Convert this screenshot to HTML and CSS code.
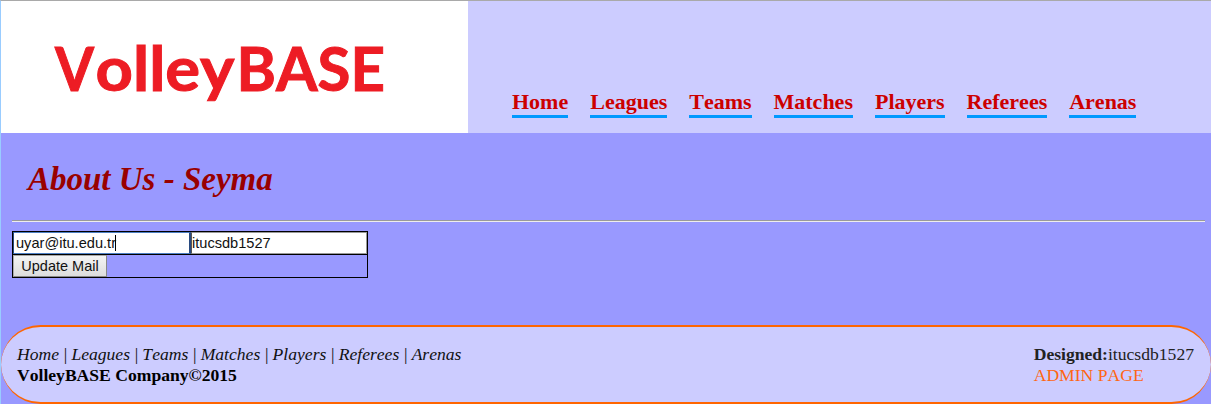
FILE: index.html
```html
<!DOCTYPE html>
<html lang="en">
<head>
<meta charset="utf-8">
<title>VolleyBASE</title>
<link rel="stylesheet" href="styles.css">
</head>
<body>
<div class="page">
  <header class="header">
    <a class="brand" href="#">
      <svg class="logo" width="467" height="132" viewBox="0 0 467 132" role="img" aria-label="VolleyBASE">
        <text class="logo-text" y="90"><tspan x="54" textLength="39" lengthAdjust="spacingAndGlyphs">V</tspan><tspan x="94.5" textLength="139" lengthAdjust="spacingAndGlyphs">olley</tspan><tspan x="235.5" textLength="148.5" lengthAdjust="spacingAndGlyphs">BASE</tspan></text>
      </svg>
    </a>
    <nav class="nav">
      <a href="#">Home</a>
      <a href="#">Leagues</a>
      <a href="#">Teams</a>
      <a href="#">Matches</a>
      <a href="#">Players</a>
      <a href="#">Referees</a>
      <a href="#">Arenas</a>
    </nav>
  </header>
  <main class="content">
    <h1 class="title">About Us - Seyma</h1>
    <div class="rule"></div>
    <form class="form">
      <div class="fields">
        <div class="field field-focus">uyar@itu.edu.tr<span class="caret"></span></div>
        <div class="field">itucsdb1527</div>
      </div>
      <div class="actions"><button class="button" type="button">Update Mail</button></div>
    </form>
  </main>
  <footer class="footer">
    <div>
      <div class="links"><a href="#">Home</a> | <a href="#">Leagues</a> | <a href="#">Teams</a> | <a href="#">Matches</a> | <a href="#">Players</a> | <a href="#">Referees</a> | <a href="#">Arenas</a></div>
      <div class="company">VolleyBASE Company©2015</div>
    </div>
    <div class="credits">
      <div><b>Designed:</b>itucsdb1527</div>
      <a class="admin" href="#">ADMIN PAGE</a>
    </div>
  </footer>
</div>
</body>
</html>
```
FILE: styles.css
```css
* { box-sizing: border-box; }
body {
  margin: 0;
  overflow: hidden;
  font-family: "Liberation Serif", serif;
  font-size: 17.6px;
  line-height: 21px;
  font-kerning: none;
}
a { color: inherit; text-decoration: none; }
.page {
  height: 404px;
  display: flex;
  flex-direction: column;
  border-top: 1px solid #a9a9a9;
  border-left: 1px solid #99ccff;
  background: #9999ff;
}
.header { display: flex; height: 132px; background: #ccccff; }
.brand { width: 467px; background: #fff; }
.logo { display: block; }
.logo-text {
  font-family: Lato, sans-serif;
  font-weight: 700;
  font-size: 60.5px;
  fill: #ed1c24;
  stroke: #ed1c24;
  stroke-width: 1px;
}
.nav {
  display: flex;
  align-items: flex-end;
  gap: 22px;
  padding: 0 0 15px 44px;
  font-size: 22px;
  font-weight: bold;
  line-height: 25px;
  color: #cc0000;
}
.nav a { border-bottom: 3px solid #0099ff; padding-bottom: 1px; }
.content { height: 192px; padding: 26px 6px 0 11px; }
.title {
  margin: 0;
  padding-left: 16px;
  height: 61px;
  font-size: 33px;
  line-height: 40px;
  font-style: italic;
  color: #990000;
}
.rule { height: 2px; border-top: 1px solid #9a9a9a; border-bottom: 1px solid #eee; }
.form {
  width: 356px;
  height: 47px;
  margin-top: 9px;
  border: 1px solid #000;
  font-family: "Liberation Sans", sans-serif;
  font-size: 14.6px;
  color: #111;
}
.fields {
  display: grid;
  grid-template-columns: 178px 176px;
  height: 23px;
  border-bottom: 1px solid #000;
}
.field {
  display: flex;
  align-items: center;
  height: 22px;
  padding-left: 0;
  background: #fff;
  border: 1px solid #999;
  border-left-color: #555;
}
.field-focus {
  padding-left: 2px;
  border-color: #4d7fc4;
  border-left-color: #284a80;
  border-right: 2px solid #284a80;
}
.caret { width: 1px; height: 16px; margin-left: -1px; background: #000; }
.actions { height: 22px; display: flex; }
.button {
  width: 94px;
  height: 22px;
  padding: 0;
  border: 1px solid #a9a9a9;
  border-right-color: #888;
  border-bottom-color: #888;
  background: linear-gradient(#f4f4f4, #dddddd);
  font: 14.5px "Liberation Sans", sans-serif;
  color: #111;
}
.footer {
  display: flex;
  justify-content: space-between;
  height: 79px;
  padding: 17px 17px 0 16px;
  border: 2px solid #ff6600;
  border-width: 2px 0;
  border-radius: 40px;
  background: #ccccff;
}
.links { color: #111; font-style: italic; word-spacing: -0.65px; }
.company { font-weight: bold; color: #000; }
.credits { color: #222; }
.admin { color: #ff6611; }
```
